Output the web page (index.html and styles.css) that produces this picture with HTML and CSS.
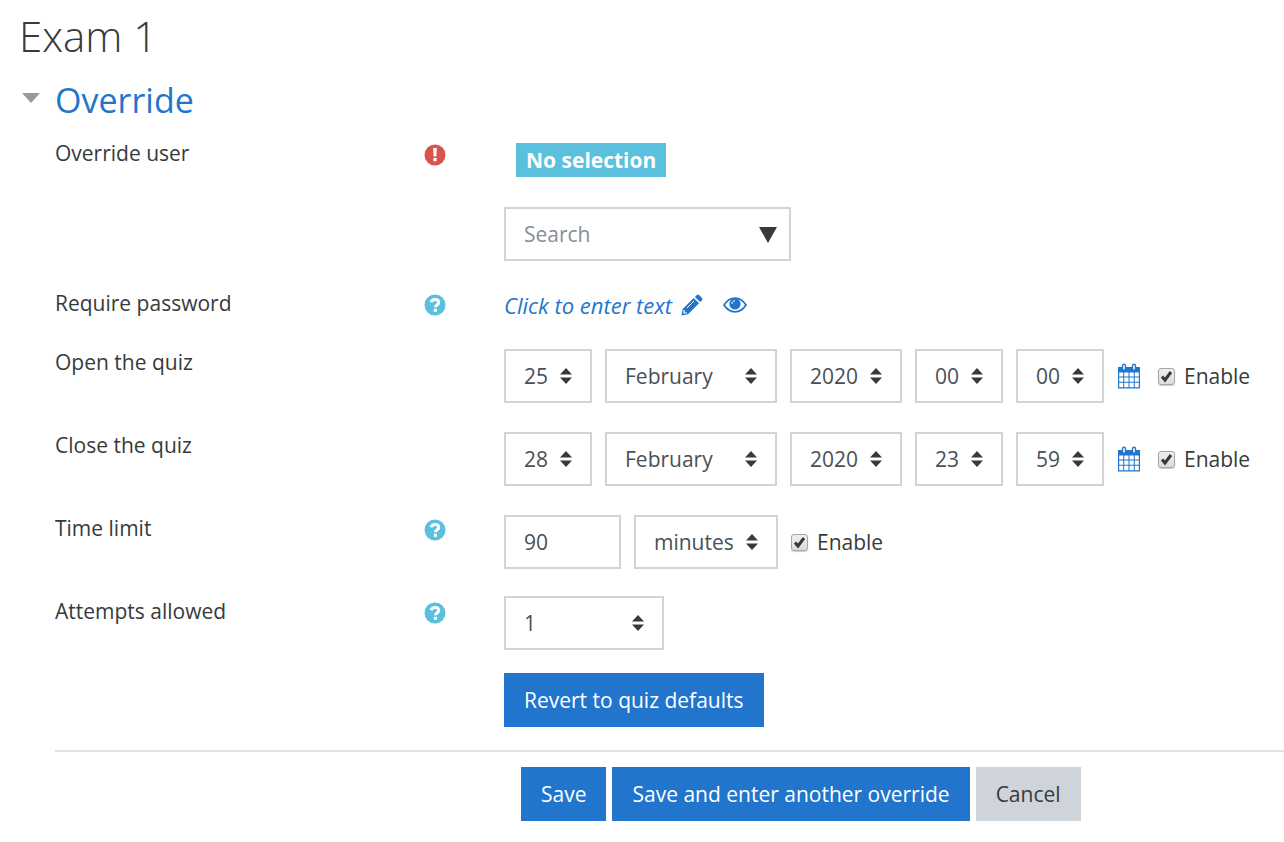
FILE: index.html
```html
<!DOCTYPE html>
<html lang="en">

	<head>
		<meta charset="UTF-8">
		<title>Exam 1</title>
		<link rel="stylesheet" href="styles.css">
	</head>

	<body>
		<svg class="sprite" aria-hidden="true">
			<symbol id="help" viewBox="0 0 22 22">
				<circle cx="11" cy="11" r="10.5" fill="#5bc0de"/>
				<path d="M7 8.300C7.600 6.300 9.100 5.500 11.100 5.500c2.200 0 3.600 1.200 3.600 2.900 0 2.500-3.300 2.500-3.300 4.800" fill="none" stroke="#fff" stroke-width="3"/>
				<path d="M9.800 14.800h3.200v3h-3.200z" fill="#fff"/>
			</symbol>
			<symbol id="calendar" viewBox="0 0 24 26">
				<path d="M1 4h22v21.500H1z" fill="#2175cc"/>
				<path d="M2.200 9.500h4v4h-4zm5 0h4.300v4H7.200zm5.300 0h4.300v4h-4.300zm5.300 0h4v4h-4zM2.200 14.500h4v4.300h-4zm5 0h4.300v4.300H7.200zm5.300 0h4.300v4.300h-4.300zm5.300 0h4v4.300h-4zM2.200 19.800h4v4.500h-4zm5 0h4.300v4.500H7.200zm5.300 0h4.300v4.500h-4.300zm5.300 0h4v4.500h-4z" fill="#fff"/>
				<rect x="5.500" y="1.200" width="3" height="6" rx="1.500" fill="#fff" stroke="#2175cc" stroke-width="1.400"/>
				<rect x="15.500" y="1.200" width="3" height="6" rx="1.500" fill="#fff" stroke="#2175cc" stroke-width="1.400"/>
			</symbol>
		</svg>
		<main>
			<h1>Exam 1</h1>
			<form>
				<h2>
					<svg class="caret" viewBox="0 0 18 14"><path d="M0 0h18L9 10z" fill="#999"/></svg>
					<a href="#override">Override</a>
				</h2>
				<div id="override" class="fields">
					<div class="item">
						<label class="name" for="user">Override user</label>
						<div class="icon">
							<svg viewBox="0 0 22 22"><circle cx="11" cy="11" r="10.5" fill="#d9534f"/><path d="M9.200 4h3.600l-.4 8.600H9.600zM9.400 14h3.200v3.200H9.400z" fill="#fff"/></svg>
						</div>
						<div class="user">
							<span class="badge">No selection</span>
							<div class="search">
								<input type="text" id="user" placeholder="Search">
								<svg class="down" viewBox="0 0 18 16"><path d="M0 0h18L9 16z" fill="#373a3c"/></svg>
							</div>
						</div>
					</div>
					<div class="item">
						<div class="name">Require password</div>
						<div class="icon"><svg><use href="#help"/></svg></div>
						<div class="password">
							<a href="#password">Click to enter text
								<svg class="pencil" viewBox="0 0 22 22"><path d="M.5 21.500l1.200-6.500L12.700 4l5.300 5.300L7 20.300zM13.900 2.900l1.700-1.700c.8-.8 1.900-.8 2.700 0l2.500 2.500c.8.800.8 1.900 0 2.700l-1.700 1.700z" fill="#2175cc"/><path d="M6 14l7-7" stroke="#fff" stroke-width="1"/><path d="M3 16v3h3" fill="none" stroke="#fff" stroke-width="1.200"/></svg>
							</a>
							<a href="#show" aria-label="Reveal">
								<svg class="eye" viewBox="0 0 24 16"><path d="M1 8C7-1.200 17-1.200 23 8 17 17.200 7 17.200 1 8z" fill="#fff" stroke="#2175cc" stroke-width="1.800"/><circle cx="12" cy="7" r="5.600" fill="#2175cc"/><path d="M9 7c0-2 1-3.200 3-3.200" fill="none" stroke="#fff" stroke-width="1"/></svg>
							</a>
						</div>
					</div>
					<div class="item">
						<div class="name">Open the quiz</div>
						<div class="icon"></div>
						<div class="group">
							<select class="two" aria-label="Day"><option>25</option></select>
							<select class="month" aria-label="Month"><option>February</option></select>
							<select class="year" aria-label="Year"><option>2020</option></select>
							<select class="two" aria-label="Hour"><option>00</option></select>
							<select class="two" aria-label="Minute"><option>00</option></select>
							<a href="#calendar" aria-label="Calendar"><svg class="calendar"><use href="#calendar"/></svg></a>
							<label class="enable"><input type="checkbox" checked>Enable</label>
						</div>
					</div>
					<div class="item">
						<div class="name">Close the quiz</div>
						<div class="icon"></div>
						<div class="group">
							<select class="two" aria-label="Day"><option>28</option></select>
							<select class="month" aria-label="Month"><option>February</option></select>
							<select class="year" aria-label="Year"><option>2020</option></select>
							<select class="two" aria-label="Hour"><option>23</option></select>
							<select class="two" aria-label="Minute"><option>59</option></select>
							<a href="#calendar" aria-label="Calendar"><svg class="calendar"><use href="#calendar"/></svg></a>
							<label class="enable"><input type="checkbox" checked>Enable</label>
						</div>
					</div>
					<div class="item">
						<label class="name" for="limit">Time limit</label>
						<div class="icon"><svg><use href="#help"/></svg></div>
						<div class="group">
							<input type="text" id="limit" class="limit" value="90">
							<select class="unit" aria-label="Unit"><option>minutes</option></select>
							<label class="enable"><input type="checkbox" checked>Enable</label>
						</div>
					</div>
					<div class="item last">
						<label class="name" for="attempts">Attempts allowed</label>
						<div class="icon"><svg><use href="#help"/></svg></div>
						<div>
							<select id="attempts" class="attempts"><option>1</option></select>
						</div>
					</div>
					<div class="item last">
						<div class="name"></div>
						<div class="icon"></div>
						<button type="button">Revert to quiz defaults</button>
					</div>
					<div class="actions">
						<button type="submit">Save</button>
						<button type="submit">Save and enter another override</button>
						<button type="button" class="cancel">Cancel</button>
					</div>
				</div>
			</form>
		</main>
	</body>

</html>
```
FILE: styles.css
```css
* {
	margin: 0;
	padding: 0;
	box-sizing: border-box;
}

body {
	background-color: #fff;
	color: #373a3c;
	font-family: "Open Sans", "Noto Sans", sans-serif;
	font-size: 21px;
	line-height: 30px;
}

a {
	color: #2175cc;
	text-decoration: none;
}

svg {
	display: block;
	flex: none;
}

.sprite {
	position: absolute;
	width: 0;
	height: 0;
}

main {
	padding: 12px 0 20px 19px;
}

h1 {
	font-size: 42px;
	line-height: 48px;
	font-weight: 300;
}

h2 {
	display: flex;
	align-items: center;
	gap: 15px;
	margin: 16px 0 14px 3px;
	font-size: 34px;
	line-height: 48px;
	font-weight: 400;
}

.caret {
	width: 18px;
	height: 14px;
}

.fields {
	margin-left: 36px;
}

.item {
	display: flex;
	align-items: flex-start;
	margin-bottom: 27px;
}

.last {
	margin-bottom: 23px;
}

.name {
	width: 369px;
	flex: none;
}

.icon {
	width: 80px;
	flex: none;
	padding-top: 6px;
}

.icon svg {
	width: 22px;
	height: 22px;
}

.user {
	padding-top: 5px;
}

.badge {
	display: inline-block;
	margin-left: 12px;
	padding: 0 10px;
	line-height: 34px;
	background-color: #5bc0de;
	color: #fff;
	font-weight: 700;
	vertical-align: top;
}

.search {
	position: relative;
	width: 287px;
	margin-top: 30px;
}

.search input {
	width: 100%;
}

.down {
	position: absolute;
	right: 14px;
	top: 20px;
	width: 18px;
	height: 16px;
}

.password {
	display: flex;
	gap: 20px;
	align-items: center;
	padding-top: 2px;
	font-size: 22px;
}

.password a {
	display: flex;
	align-items: center;
	gap: 9px;
	font-style: italic;
}

.pencil {
	width: 22px;
	height: 22px;
}

.eye {
	width: 24px;
	height: 16px;
}

.group {
	display: flex;
	align-items: center;
	gap: 13px;
	padding-top: 2px;
}

input[type="text"],
select {
	display: block;
	height: 54px;
	padding: 0 18px;
	border: 2px solid #ced4da;
	border-radius: 0;
	background-color: #fff;
	color: #495057;
	font: inherit;
}

::placeholder {
	color: #868e96;
	opacity: 1;
}

select {
	appearance: none;
	background-image: url("data:image/svg+xml,%3Csvg xmlns='http://www.w3.org/2000/svg' viewBox='0 0 12 16'%3E%3Cpath d='M0 6.500L6 0l6 6.500zM0 9.500h12L6 16z' fill='%23373a3c'/%3E%3C/svg%3E");
	background-repeat: no-repeat;
	background-position: right 18px center;
	background-size: 12px 16px;
}

.two {
	width: 88px;
	padding-right: 0;
}

.month {
	width: 172px;
}

.year {
	width: 112px;
	padding-right: 0;
}

.limit {
	width: 117px;
}

.unit {
	width: 144px;
	padding-right: 0;
}

.attempts {
	width: 160px;
}

.calendar {
	width: 24px;
	height: 26px;
}

.enable {
	display: flex;
	align-items: center;
	gap: 9px;
}

.group a + .enable {
	margin-left: 4px;
}

input[type="checkbox"] {
	appearance: none;
	width: 17px;
	height: 17px;
	border: 1px solid #a6a6a6;
	border-radius: 3px;
	background: url("data:image/svg+xml,%3Csvg xmlns='http://www.w3.org/2000/svg' viewBox='0 0 15 15'%3E%3Cpath d='M3 7.500l3 3.500 6-8' fill='none' stroke='%23373a3c' stroke-width='3'/%3E%3C/svg%3E") center / 15px 15px no-repeat, linear-gradient(#eee, #dcdcdc);
	box-shadow: 0 1px 1px #ccc;
}

button {
	height: 54px;
	padding: 0 20px;
	border: none;
	background-color: #2175cc;
	color: #fff;
	font: inherit;
	cursor: pointer;
}

.cancel {
	background-color: #ced4da;
	color: #373a3c;
}

.actions {
	display: flex;
	gap: 6px;
	padding: 15px 0 0 466px;
	border-top: 2px solid #dee2e6;
}
```
